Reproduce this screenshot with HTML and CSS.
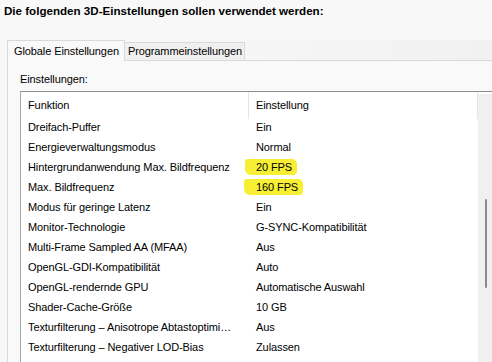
FILE: index.html
```html
<!DOCTYPE html>
<html lang="de">
<head>
<meta charset="utf-8">
<link rel="stylesheet" href="styles.css">
</head>
<body>
<div class="window">
  <div class="title">Die folgenden 3D-Einstellungen sollen verwendet werden:</div>
  <div class="tabs">
    <div class="tab active">Globale Einstellungen</div>
    <div class="tab">Programmeinstellungen</div>
  </div>
  <div class="panel">
    <div class="label">Einstellungen:</div>
    <div class="list">
      <div class="table">
        <div class="row head">
          <div class="cell sep">Funktion</div>
          <div class="cell sep">Einstellung</div>
        </div>
        <div class="row"><div class="cell">Dreifach-Puffer</div><div class="cell">Ein</div></div>
        <div class="row"><div class="cell">Energieverwaltungsmodus</div><div class="cell">Normal</div></div>
        <div class="row"><div class="cell">Hintergrundanwendung Max. Bildfrequenz</div><div class="cell"><span class="mark">20 FPS</span></div></div>
        <div class="row"><div class="cell">Max. Bildfrequenz</div><div class="cell"><span class="mark mark2">160 FPS</span></div></div>
        <div class="row"><div class="cell">Modus für geringe Latenz</div><div class="cell">Ein</div></div>
        <div class="row"><div class="cell">Monitor-Technologie</div><div class="cell">G-SYNC-Kompatibilität</div></div>
        <div class="row"><div class="cell">Multi-Frame Sampled AA (MFAA)</div><div class="cell">Aus</div></div>
        <div class="row"><div class="cell">OpenGL-GDI-Kompatibilität</div><div class="cell">Auto</div></div>
        <div class="row"><div class="cell">OpenGL-rendernde GPU</div><div class="cell">Automatische Auswahl</div></div>
        <div class="row"><div class="cell">Shader-Cache-Größe</div><div class="cell">10 GB</div></div>
        <div class="row"><div class="cell">Texturfilterung – Anisotrope Abtastoptimi…</div><div class="cell">Aus</div></div>
        <div class="row"><div class="cell">Texturfilterung – Negativer LOD-Bias</div><div class="cell">Zulassen</div></div>
      </div>
      <div class="scroll"><div class="thumb"></div></div>
    </div>
  </div>
</div>
</body>
</html>
```
FILE: styles.css
```css
html, body {
  margin: 0;
  padding: 0;
  overflow: hidden;
}
body {
  width: 492px;
  height: 362px;
  background: #f8f8f8;
  font-family: "Liberation Sans", Arial, sans-serif;
  font-size: 11px;
  letter-spacing: -0.1px;
  color: #000;
}
.window {
  display: flex;
  flex-direction: column;
  width: 492px;
  height: 362px;
  overflow: hidden;
}
.title {
  padding: 3px 4px;
  line-height: 16px;
  font-weight: bold;
  font-size: 11.6px;
  letter-spacing: 0;
  white-space: nowrap;
}
.tabs {
  display: flex;
  align-items: flex-end;
  margin-top: 18px;
  padding-left: 7px;
  height: 20px;
  background: linear-gradient(to right, #f8f8f8 0, #f8f8f8 120px, #f1f1f1 492px);
}
.tab {
  box-sizing: border-box;
  height: 18px;
  line-height: 17px;
  padding: 0 2px 0 3px;
  border: 1px solid #d9d9d9;
  border-bottom: none;
  border-left: none;
  background: #f0f0f0;
  white-space: nowrap;
}
.tab.active {
  height: 21px;
  line-height: 20px;
  padding: 0 5px 0 6px;
  margin-bottom: -1px;
  background: #f9f9f9;
  border-left: 1px solid #d9d9d9;
  border-right: 1px solid #d9d9d9;
  position: relative;
  z-index: 1;
}
.panel {
  flex: 1;
  border-top: 1px solid #d9d9d9;
  border-left: 1px solid #d9d9d9;
  margin-left: 7px;
  padding: 10px 0 0 12px;
  background: #f9f9f9;
}
.label {
  line-height: 16px;
  margin-bottom: 4px;
}
.list {
  display: flex;
  width: 480px;
  height: 300px;
  background: #fff;
  border-top: 1px solid #8c8c8c;
  border-left: 1px solid #a9a9a9;
}
.table {
  flex: 0 0 457px;
}
.row {
  display: grid;
  grid-template-columns: 228px 229px;
  height: 20px;
  line-height: 20px;
}
.row.head {
  height: 25px;
  line-height: 27px;
}
.cell {
  padding-left: 7px;
  white-space: nowrap;
  overflow: visible;
}
.cell.sep {
  border-right: 1px solid #e5e5e5;
}
.mark {
  background: #f6ef33;
  margin-left: -11px;
  padding: 2px 5px 2px 11px;
  border-radius: 3px 5px 4px 6px;
}
.mark2 {
  margin-left: -12px;
  padding-left: 12px;
  padding-right: 5px;
}
.scroll {
  flex: 0 0 22px;
  margin-top: 2px;
  background: #f0f0f0;
  display: flex;
  flex-direction: column;
  padding-left: 7px;
  box-sizing: border-box;
}
.thumb {
  width: 2px;
  height: 89px;
  margin-top: 105px;
  background: #8b8b8b;
  border-radius: 1px;
}
```
